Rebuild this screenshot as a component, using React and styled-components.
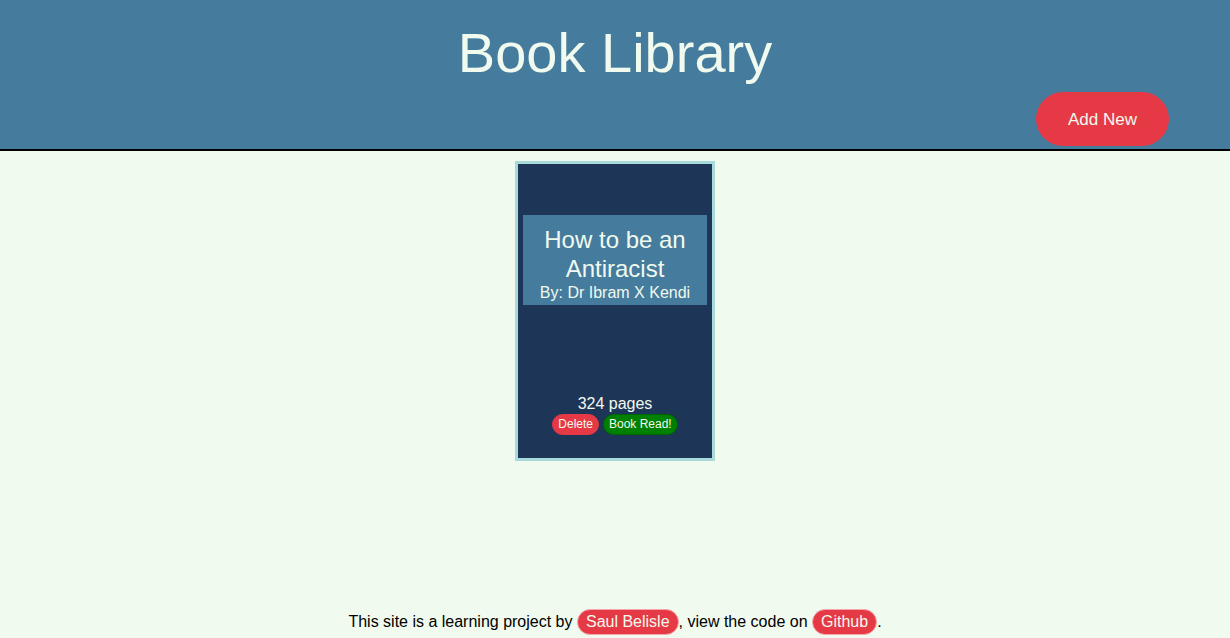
import styled, { createGlobalStyle } from "styled-components";

const GlobalStyle = createGlobalStyle`
    html, body {
        margin: 0;
        padding: 0;
    }

    body {
        background-color: #f1faee;
        font-family: "Liberation Sans", Arial, Helvetica, sans-serif;
        color: #000;
    }
`;

const Page = styled.div`
    min-height: 100vh;
    display: flex;
    flex-direction: column;
`;

const Header = styled.header`
    background-color: #457b9d;
    border-bottom: 2px solid #000;
    padding-bottom: 3px;
`;

const Title = styled.h1`
    margin: 20px 0 0;
    font-size: 56px;
    font-weight: 400;
    text-align: center;
    color: #f1faee;
`;

const ButtonRow = styled.div`
    display: flex;
    justify-content: flex-end;
    margin-top: 7px;
    padding-right: 61px;
`;

const AddButton = styled.button`
    width: 133px;
    height: 54px;
    border: none;
    border-radius: 27px;
    background-color: #e63946;
    color: #f1faee;
    font-family: inherit;
    font-size: 17px;
    padding-top: 2px;
    cursor: pointer;
`;

const Main = styled.main`
    flex: 1;
    display: flex;
    flex-wrap: wrap;
    justify-content: center;
    align-items: flex-start;
    gap: 16px;
    padding-top: 10px;
`;

const Card = styled.div`
    width: 194px;
    height: 294px;
    border: 3px solid #a8dadc;
    background-color: #1d3557;
    color: #f1faee;
    display: flex;
    flex-direction: column;
    justify-content: space-between;
    text-align: center;
`;

const TitleBox = styled.div`
    margin: 51px 5px 0;
    height: 90px;
    box-sizing: border-box;
    padding-top: 10px;
    background-color: #457b9d;
`;

const BookTitle = styled.div`
    font-size: 24px;
    line-height: 29px;
`;

const Author = styled.div`
    font-size: 16px;
    line-height: 18px;
    margin-top: 1px;
`;

const CardBottom = styled.div`
    padding-bottom: 23px;
`;

const Pages = styled.div`
    font-size: 16px;
    line-height: 18px;
    margin-bottom: 1px;
`;

const SmallButton = styled.button`
    font-family: inherit;
    font-size: 12px;
    line-height: 17px;
    padding: 1px 5px;
    margin: 0 2px;
    border-radius: 11px;
    border: 1px solid ${props => props.$variant === "read" ? "#006400" : "#e63946"};
    background-color: ${props => props.$variant === "read" ? "#008000" : "#e63946"};
    color: #f1faee;
    cursor: pointer;
`;

const Footer = styled.footer`
    text-align: center;
    font-size: 16px;
    line-height: 18px;
    padding-bottom: 3px;
`;

const Pill = styled.a`
    display: inline-block;
    padding: 3px 8px;
    border: 1px solid #f4a7ad;
    border-radius: 13px;
    background-color: #e63946;
    color: #f1faee;
    text-decoration: none;
`;

const books = [
    { title: "How to be an Antiracist", author: "Dr Ibram X Kendi", pages: 324 },
];

const App = () => {
  return (
    <Page>
        <GlobalStyle />
        <Header>
            <Title>Book Library</Title>
            <ButtonRow>
                <AddButton>Add New</AddButton>
            </ButtonRow>
        </Header>
        <Main>
            {books.map(book => (
                <Card key={book.title}>
                    <TitleBox>
                        <BookTitle>{book.title}</BookTitle>
                        <Author>By: {book.author}</Author>
                    </TitleBox>
                    <CardBottom>
                        <Pages>{book.pages} pages</Pages>
                        <SmallButton>Delete</SmallButton>
                        <SmallButton $variant="read">Book Read!</SmallButton>
                    </CardBottom>
                </Card>
            ))}
        </Main>
        <Footer>
            This site is a learning project by <Pill href="#">Saul Belisle</Pill>, view the code on <Pill href="#">Github</Pill>.
        </Footer>
    </Page>
  )
}

export default App
